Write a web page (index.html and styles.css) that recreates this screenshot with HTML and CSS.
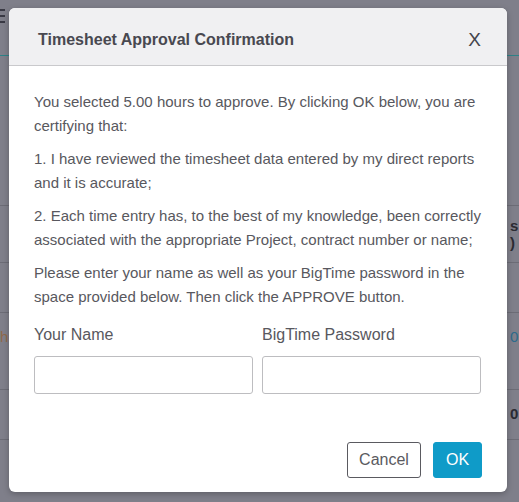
FILE: index.html
```html
<!DOCTYPE html>
<html>
<head>
<meta charset="utf-8">
<link rel="stylesheet" href="styles.css">
</head>
<body>
<div class="page">
  <div class="topbar">
    <div class="burger"><span></span><span></span><span></span></div>
  </div>
  <div class="row r1"></div>
  <div class="row r2"><span class="rt bold stack">s<br>)</span></div>
  <div class="row r3"></div>
  <div class="row r4"><span class="lt orange">h</span><span class="rt blue">0</span></div>
  <div class="row r5"><span class="rt bold">0</span></div>
  <div class="row r6"></div>
</div>
<div class="overlay">
  <div class="modal">
    <div class="modal-header">
      <h1 class="title">Timesheet Approval Confirmation</h1>
      <span class="close">X</span>
    </div>
    <div class="modal-body">
      <p>You selected 5.00 hours to approve. By clicking OK below, you are certifying that:</p>
      <p>1. I have reviewed the timesheet data entered by my direct reports and it is accurate;</p>
      <p>2. Each time entry has, to the best of my knowledge, been correctly associated with the appropriate Project, contract number or name;</p>
      <p>Please enter your name as well as your BigTime password in the space provided below. Then click the APPROVE button.</p>
      <div class="fields">
        <label class="field"><span class="label">Your Name</span><input type="text" class="input"></label>
        <label class="field"><span class="label">BigTime Password</span><input type="password" class="input"></label>
      </div>
    </div>
    <div class="modal-footer">
      <button class="btn btn-cancel">Cancel</button>
      <button class="btn btn-ok">OK</button>
    </div>
  </div>
</div>
</body>
</html>
```
FILE: styles.css
```css
* { box-sizing: border-box; }
html, body { margin: 0; padding: 0; }
body {
  width: 519px;
  height: 502px;
  overflow: hidden;
  background: #7f7f8a;
  font-family: "Liberation Sans", Arial, sans-serif;
  position: relative;
}
.page { width: 519px; height: 502px; background: #7f7f8a; }
.topbar {
  height: 56px;
  border-bottom: 1px solid #2e8288;
  padding-top: 9px;
}
.burger { width: 5px; display: flex; flex-direction: column; gap: 4px; }
.burger span { display: block; height: 2px; background: #3a3a45; }
.row {
  position: relative;
  border-bottom: 1px solid #6c6c76;
  display: flex;
  align-items: center;
  justify-content: space-between;
  font-size: 15px;
}
.r1 { height: 150px; }
.r2 { height: 57px; }
.r3 { height: 50px; }
.r4 { height: 77px; align-items: flex-start; padding-top: 15px; }
.r5 { height: 50px; align-items: flex-end; padding-bottom: 17px; }
.r6 { height: 60px; border-bottom: none; }
.rt { margin-left: auto; width: 11px; padding-left: 2px; }
.stack { line-height: 17px; }
.lt { margin-left: 0; }
.bold { font-weight: bold; color: #2b2b33; }
.orange { color: #8f6a4c; }
.blue { color: #2d6b8c; }

.overlay {
  position: absolute;
  inset: 0;
  padding: 8px 0 0 9px;
}
.modal {
  width: 498px;
  height: 484px;
  background: #fff;
  border-radius: 6px;
  overflow: hidden;
  box-shadow: 0 2px 6px rgba(0,0,0,0.25);
  display: flex;
  flex-direction: column;
}
.modal-header {
  height: 58px;
  background: #f0f0f2;
  border-bottom: 1px solid #c9c9cc;
  display: flex;
  align-items: center;
  justify-content: space-between;
  padding: 6px 26px 0 29px;
}
.title {
  margin: 0;
  font-size: 16px;
  font-weight: bold;
  color: #484850;
}
.close {
  font-size: 19px;
  color: #44444c;
  line-height: 1;
}
.modal-body {
  padding: 24px 26px 0 25px;
  color: #58585e;
  font-size: 15px;
  line-height: 24px;
}
.modal-body p { margin: 0 0 9px; }
.fields {
  display: grid;
  grid-template-columns: 1fr 1fr;
  gap: 9px;
  margin-top: 16px;
}
.field { display: flex; flex-direction: column; }
.label {
  font-size: 16px;
  line-height: 20px;
  color: #58585e;
  margin-bottom: 11px;
}
.input {
  height: 38px;
  border: 1px solid #bdbdc0;
  border-radius: 3px;
  background: #fff;
  font: inherit;
}
.modal-footer {
  margin-top: auto;
  display: flex;
  justify-content: flex-end;
  gap: 12px;
  padding: 0 25px 14px 0;
}
.btn {
  height: 36px;
  border-radius: 3px;
  font-family: "Liberation Sans", Arial, sans-serif;
  font-size: 16px;
  padding: 0;
}
.btn-cancel {
  width: 74px;
  background: #fff;
  border: 1px solid #5a5a60;
  color: #5a5a60;
}
.btn-ok {
  width: 49px;
  background: #0f9bc8;
  border: 1px solid #0f9bc8;
  color: #fff;
}
```
